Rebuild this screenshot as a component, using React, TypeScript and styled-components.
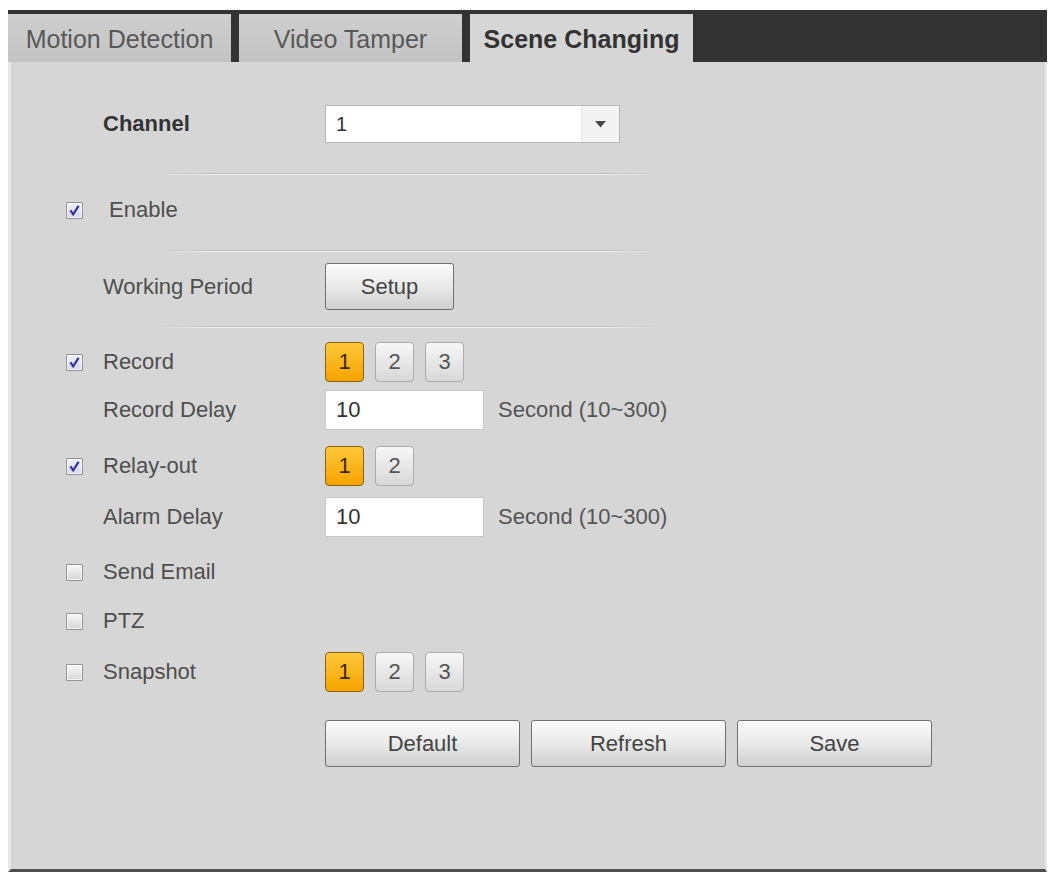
import React from "react"
import styled, { createGlobalStyle } from "styled-components"

const GlobalStyle = createGlobalStyle`
  html, body {
    margin: 0;
    padding: 0;
    background: #fff;
  }
  body {
    font-family: "Liberation Sans", Arial, sans-serif;
  }
`

const Frame = styled.div`
  margin: 10px 0 0 8px;
  width: 1039px;
`

const TabBar = styled.div`
  display: flex;
  gap: 8px;
  height: 52px;
  padding-top: 4px;
  box-sizing: border-box;
  background: #333;
`

const Tab = styled.div<{ $active?: boolean }>`
  width: 223px;
  display: flex;
  align-items: center;
  justify-content: center;
  padding-top: 2px;
  box-sizing: border-box;
  font-size: 25px;
  font-weight: ${p => (p.$active ? 700 : 400)};
  color: ${p => (p.$active ? "#333" : "#585858")};
  background: ${p => (p.$active ? "#d6d6d6" : "linear-gradient(#cecece, #c3c3c3)")};
`

const Panel = styled.div`
  height: 810px;
  box-sizing: border-box;
  background: #d6d6d6;
  border-left: 3px solid #e8e8e8;
  border-right: 2px solid #e8e8e8;
  border-bottom: 3px solid #4d4d4d;
  padding: 43px 0 0 55px;
`

const Row = styled.div<{ $h: number; $mt: number }>`
  display: grid;
  grid-template-columns: 37px 222px auto;
  align-items: center;
  height: ${p => p.$h}px;
  margin-top: ${p => p.$mt}px;
`

const Label = styled.span<{ $bold?: boolean }>`
  font-size: 22px;
  line-height: 1;
  font-weight: ${p => (p.$bold ? 700 : 400)};
  color: ${p => (p.$bold ? "#333" : "#4e4e4e")};
`

const Controls = styled.div`
  display: flex;
  align-items: center;
  gap: 11px;
`

const Divider = styled.div<{ $mt: number }>`
  margin: ${p => p.$mt}px 0 0 92px;
  width: 500px;
  height: 2px;
  background:
    linear-gradient(to right, transparent, #bcbcbc 12%, #bcbcbc 88%, transparent) top / 100% 1px no-repeat,
    linear-gradient(to right, transparent, #f3f3f3 12%, #f3f3f3 88%, transparent) bottom / 100% 1px no-repeat;
`

const Box = styled.span<{ $checked?: boolean }>`
  width: 17px;
  height: 17px;
  box-sizing: border-box;
  display: flex;
  align-items: center;
  justify-content: center;
  border: 1px solid #949494;
  border-radius: 1px;
  background: ${p => (p.$checked ? "linear-gradient(#eef0fa, #d4d8ee)" : "linear-gradient(#f8f8f8, #d6d6d6)")};
  box-shadow: inset 0 0 0 1px rgba(255, 255, 255, 0.7);
`

const Select = styled.div`
  width: 295px;
  height: 38px;
  box-sizing: border-box;
  display: flex;
  background: #fff;
  border: 1px solid #b8b8b8;
`

const SelectValue = styled.span`
  flex: 1;
  display: flex;
  align-items: center;
  padding-left: 10px;
  font-size: 20px;
  color: #333;
`

const SelectArrow = styled.span`
  width: 37px;
  display: flex;
  align-items: center;
  justify-content: center;
  background: #f3f3f3;
  border-left: 1px solid #e6e6e6;
`

const Button = styled.button<{ $w: number }>`
  width: ${p => p.$w}px;
  height: 47px;
  padding: 0;
  font-family: inherit;
  font-size: 22px;
  color: #444;
  border: 1px solid #707070;
  border-radius: 3px;
  background: linear-gradient(#fbfbfb, #e9e9e9 50%, #cfcfcf);
  box-shadow: inset 0 1px 0 #fff;
`

const NumKey = styled.span<{ $on?: boolean }>`
  width: 39px;
  height: 40px;
  box-sizing: border-box;
  display: flex;
  align-items: center;
  justify-content: center;
  font-size: 22px;
  color: ${p => (p.$on ? "#3a2a00" : "#555")};
  border: 1px solid ${p => (p.$on ? "#8a6314" : "#acacac")};
  border-radius: 4px;
  background: ${p => (p.$on ? "linear-gradient(#ffc83a, #f7a300)" : "linear-gradient(#f7f7f7, #d8d8d8)")};
`

const TextInput = styled.div`
  width: 159px;
  height: 40px;
  box-sizing: border-box;
  display: flex;
  align-items: center;
  padding-left: 10px;
  font-size: 22px;
  color: #333;
  background: #fff;
  border: 1px solid #c6c6c6;
`

const Hint = styled.span`
  margin-left: 3px;
  font-size: 22px;
  color: #555;
`

const Check = ({ checked }: { checked?: boolean }) => (
  <Box $checked={checked}>
    {checked && (
      <svg width="13" height="13" viewBox="0 0 12 12">
        <path d="M2.2 5.8 L4.8 9.6 L9.8 1.8" fill="none" stroke="#33339a" strokeWidth="2" />
      </svg>
    )}
  </Box>
)

const Keys = ({ count }: { count: number }) => (
  <Controls>
    {Array.from({ length: count }, (_, i) => (
      <NumKey key={i} $on={i === 0}>
        {i + 1}
      </NumKey>
    ))}
  </Controls>
)

export default function App() {
  return (
    <>
      <GlobalStyle />
      <Frame>
        <TabBar>
          <Tab>Motion Detection</Tab>
          <Tab>Video Tamper</Tab>
          <Tab $active>Scene Changing</Tab>
        </TabBar>
        <Panel>
          <Row $h={38} $mt={0}>
            <span />
            <Label $bold>Channel</Label>
            <Select>
              <SelectValue>1</SelectValue>
              <SelectArrow>
                <svg width="11" height="7" viewBox="0 0 11 7">
                  <path d="M0 0 H11 L5.5 6.5 Z" fill="#4a4a4a" />
                </svg>
              </SelectArrow>
            </Select>
          </Row>
          <Divider $mt={30} />
          <Row $h={32} $mt={19}>
            <Check checked />
            <Label>&nbsp;Enable</Label>
          </Row>
          <Divider $mt={24} />
          <Row $h={47} $mt={11}>
            <span />
            <Label>Working Period</Label>
            <Controls>
              <Button $w={129}>Setup</Button>
            </Controls>
          </Row>
          <Divider $mt={16} />
          <Row $h={40} $mt={14}>
            <Check checked />
            <Label>Record</Label>
            <Keys count={3} />
          </Row>
          <Row $h={40} $mt={8}>
            <span />
            <Label>Record Delay</Label>
            <Controls>
              <TextInput>10</TextInput>
              <Hint>Second (10~300)</Hint>
            </Controls>
          </Row>
          <Row $h={40} $mt={16}>
            <Check checked />
            <Label>Relay-out</Label>
            <Keys count={2} />
          </Row>
          <Row $h={40} $mt={11}>
            <span />
            <Label>Alarm Delay</Label>
            <Controls>
              <TextInput>10</TextInput>
              <Hint>Second (10~300)</Hint>
            </Controls>
          </Row>
          <Row $h={32} $mt={19}>
            <Check />
            <Label>Send Email</Label>
          </Row>
          <Row $h={32} $mt={17}>
            <Check />
            <Label>PTZ</Label>
          </Row>
          <Row $h={40} $mt={15}>
            <Check />
            <Label>Snapshot</Label>
            <Keys count={3} />
          </Row>
          <Row $h={47} $mt={28}>
            <span />
            <span />
            <Controls>
              <Button $w={195}>Default</Button>
              <Button $w={195}>Refresh</Button>
              <Button $w={195}>Save</Button>
            </Controls>
          </Row>
        </Panel>
      </Frame>
    </>
  )
}
